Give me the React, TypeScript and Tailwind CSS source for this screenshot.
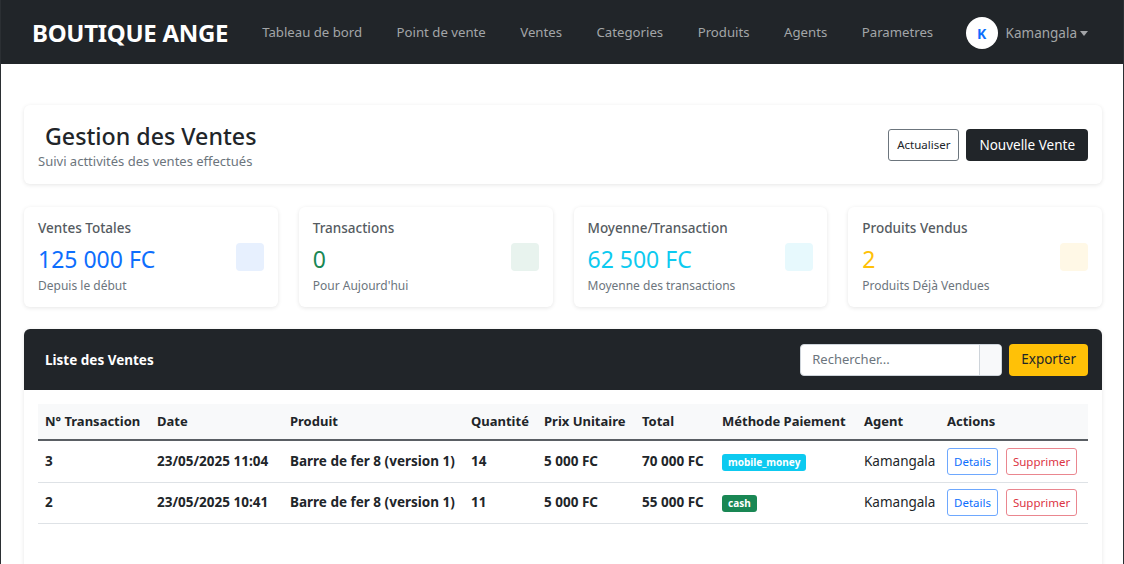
import React from 'react'

const navLinks = ['Tableau de bord', 'Point de vente', 'Ventes', 'Categories', 'Produits', 'Agents', 'Parametres']

const stats = [
    { title: 'Ventes Totales', value: '125 000 FC', sub: 'Depuis le début', color: 'text-[#0d6efd]', box: 'bg-[#e7f0fe]' },
    { title: 'Transactions', value: '0', sub: "Pour Aujourd'hui", color: 'text-[#198754]', box: 'bg-[#e8f3ee]' },
    { title: 'Moyenne/Transaction', value: '62 500 FC', sub: 'Moyenne des transactions', color: 'text-[#0dcaf0]', box: 'bg-[#e7f9fd]' },
    { title: 'Produits Vendus', value: '2', sub: 'Produits Déjà Vendues', color: 'text-[#ffc107]', box: 'bg-[#fff8e6]' },
]

const sales = [
    { id: 3, date: '23/05/2025 11:04', product: 'Barre de fer 8 (version 1)', qty: 14, price: '5 000 FC', total: '70 000 FC', method: 'mobile_money', agent: 'Kamangala' },
    { id: 2, date: '23/05/2025 10:41', product: 'Barre de fer 8 (version 1)', qty: 11, price: '5 000 FC', total: '55 000 FC', method: 'cash', agent: 'Kamangala' },
]

const cols = [112, 133, 181, 73, 98, 80, 142, 83, 148]
const heads = ['N° Transaction', 'Date', 'Produit', 'Quantité', 'Prix Unitaire', 'Total', 'Méthode Paiement', 'Agent', 'Actions']

export default function App() {
    return (
        <div className="min-h-[564px] bg-white border-x border-[#2b2f33] text-[#212529]" style={{ fontFamily: '"Noto Sans", "Open Sans", sans-serif' }}>
            {/* navbar */}
            <nav className="h-16 bg-[#212529] flex items-center pl-[31px] pr-[35px] pt-[2px] whitespace-nowrap">
                <div className="shrink-0 text-white font-bold text-[24px] tracking-[-0.3px] mr-[34px]">BOUTIQUE ANGE</div>
                <div className="flex items-center gap-[34.5px] text-[13.2px] text-[#a3a5a8]">
                    {navLinks.map(l => (
                        <span key={l}>{l}</span>
                    ))}
                </div>
                <div className="ml-auto shrink-0 flex items-center gap-[8px]">
                    <div className="w-8 h-8 rounded-full bg-white flex items-center justify-center text-[#0d6efd] font-bold text-[14px]">K</div>
                    <span className="text-[13.5px] text-[#a3a5a8]">Kamangala</span>
                    <span className="w-0 h-0 border-x-[4px] border-x-transparent border-t-[5px] border-t-[#a3a5a8] -ml-[5px]"></span>
                </div>
            </nav>

            <div className="pl-[23px] pr-[21px] pt-[41px]">
                {/* header card */}
                <div className="h-[79px] rounded-md bg-white shadow-[0_1px_4px_rgba(0,0,0,0.1)] flex items-center pl-[14px] pr-[14px]">
                    <div className="flex flex-col">
                        <h1 className="ml-[7px] text-[23.2px] font-medium leading-[32px] text-[#212529]">Gestion des Ventes</h1>
                        <p className="text-[13px] text-[#6c757d] leading-[18px]">Suivi acttivités des ventes effectués</p>
                    </div>
                    <div className="ml-auto flex items-center gap-[7px]">
                        <button className="h-[32px] px-[8px] text-[11.5px] border border-[#6c757d] rounded-[3px] bg-white text-[#212529]">Actualiser</button>
                        <button className="h-[32px] px-[13px] pt-[1px] text-[13.5px] rounded-[4px] bg-[#212529] text-white">Nouvelle Vente</button>
                    </div>
                </div>

                {/* stats */}
                <div className="grid grid-cols-4 gap-[21px] mt-[23px]">
                    {stats.map(s => (
                        <div key={s.title} className="h-[100px] rounded-md bg-white shadow-[0_1px_4px_rgba(0,0,0,0.1)] flex px-[14px] pt-[12px]">
                            <div className="flex flex-col">
                                <div className="text-[13.5px] font-medium text-[#555b61] leading-[18px]">{s.title}</div>
                                <div className={`text-[23px] leading-[34px] mt-[5px] ${s.color}`}>{s.value}</div>
                                <div className="text-[12px] text-[#6c757d] leading-[18px] mt-[1px]">{s.sub}</div>
                            </div>
                            <div className={`ml-auto mt-[24px] w-[28px] h-[28px] rounded-[4px] ${s.box}`}></div>
                        </div>
                    ))}
                </div>

                {/* sales list */}
                <div className="mt-[22px] rounded-md bg-white shadow-[0_1px_4px_rgba(0,0,0,0.1)] overflow-hidden">
                    <div className="h-[61px] bg-[#212529] flex items-center pl-[21px] pr-[14px]">
                        <div className="text-white font-bold text-[13.5px] mt-[2px]">Liste des Ventes</div>
                        <div className="ml-auto flex items-center gap-[7px]">
                            <div className="flex h-[32px] w-[202px] rounded-[4px] bg-white border border-[#ced4da] overflow-hidden">
                                <div className="flex-1 flex items-center px-[11px] text-[13px] text-[#6c757d]">Rechercher...</div>
                                <div className="w-[22px] bg-[#f8f9fa] border-l border-[#ced4da]"></div>
                            </div>
                            <button className="h-[32px] px-[12px] text-[13.5px] rounded-[4px] bg-[#ffc107] text-[#212529]">Exporter</button>
                        </div>
                    </div>

                    <div className="px-[14px] pt-[14px] pb-[60px]">
                        <table className="w-full table-fixed border-collapse text-[13.5px]">
                            <colgroup>
                                {cols.map((w, i) => <col key={i} style={{ width: w }} />)}
                            </colgroup>
                            <thead>
                                <tr className="bg-[#f8f9fa] h-[36px] border-b-2 border-[#5a5f64] text-[13px]">
                                    {heads.map(h => (
                                        <th key={h} className="text-left font-bold px-[7px] text-[#212529] whitespace-nowrap">{h}</th>
                                    ))}
                                </tr>
                            </thead>
                            <tbody>
                                {sales.map((r, i) => (
                                    <tr key={r.id} className={`${i === 0 ? 'h-[42px]' : 'h-[41px]'} border-b border-[#dee2e6] font-bold`}>
                                        <td className="px-[7px]">{r.id}</td>
                                        <td className="px-[7px] whitespace-nowrap">{r.date}</td>
                                        <td className="px-[7px] whitespace-nowrap">{r.product}</td>
                                        <td className="px-[7px]">{r.qty}</td>
                                        <td className="px-[7px] whitespace-nowrap">{r.price}</td>
                                        <td className="px-[7px] whitespace-nowrap">{r.total}</td>
                                        <td className="px-[7px]">
                                            <span className={`inline-block px-[6px] py-[1px] rounded-[3px] text-[10px] text-white ${r.method === 'cash' ? 'bg-[#198754]' : 'bg-[#0dcaf0]'}`}>{r.method}</span>
                                        </td>
                                        <td className="px-[7px] font-normal">{r.agent}</td>
                                        <td className="px-[7px] font-normal whitespace-nowrap">
                                            <div className="flex gap-[8px]">
                                                <button className="h-[27px] px-[6px] text-[11.5px] border border-[#6ea8fe] rounded-[3px] text-[#0d6efd] bg-white">Details</button>
                                                <button className="h-[27px] px-[6px] text-[11.5px] border border-[#ea868f] rounded-[3px] text-[#dc3545] bg-white">Supprimer</button>
                                            </div>
                                        </td>
                                    </tr>
                                ))}
                            </tbody>
                        </table>
                    </div>
                </div>
            </div>
        </div>
    )
}
